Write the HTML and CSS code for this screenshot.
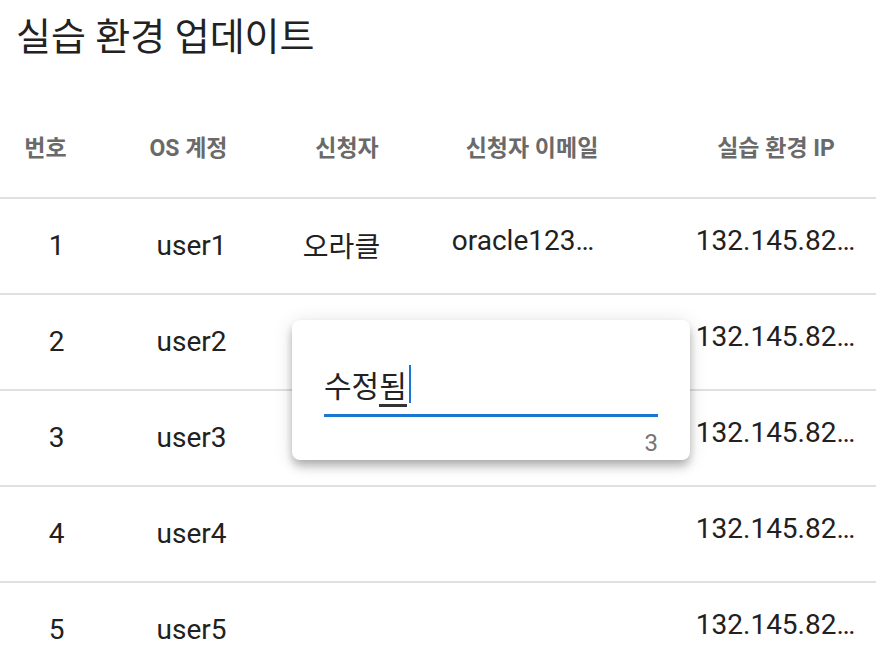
FILE: index.html
```html
<!DOCTYPE html>
<html lang="ko">
<head>
<meta charset="utf-8">
<title>실습 환경 업데이트</title>
<link rel="stylesheet" href="styles.css">
</head>
<body>
<div class="page">
  <h1 class="title">실습 환경 업데이트</h1>
  <div class="table-wrap">
    <div class="table">
      <div class="row head">
        <div class="cell th c1">번호</div>
        <div class="cell th c2">OS 계정</div>
        <div class="cell th c3">신청자</div>
        <div class="cell th c4">신청자 이메일</div>
        <div class="cell th c5">실습 환경 IP</div>
      </div>
      <div class="row">
        <div class="cell">1</div>
        <div class="cell">user1</div>
        <div class="cell">오라클</div>
        <div class="cell raised"><span class="ellip">oracle123…</span></div>
        <div class="cell raised"><span class="ellip">132.145.82…</span></div>
      </div>
      <div class="row">
        <div class="cell">2</div>
        <div class="cell">user2</div>
        <div class="cell"></div>
        <div class="cell raised"></div>
        <div class="cell raised"><span class="ellip">132.145.82…</span></div>
      </div>
      <div class="row">
        <div class="cell">3</div>
        <div class="cell">user3</div>
        <div class="cell"></div>
        <div class="cell raised"></div>
        <div class="cell raised"><span class="ellip">132.145.82…</span></div>
      </div>
      <div class="row">
        <div class="cell">4</div>
        <div class="cell">user4</div>
        <div class="cell"></div>
        <div class="cell raised"></div>
        <div class="cell raised"><span class="ellip">132.145.82…</span></div>
      </div>
      <div class="row">
        <div class="cell">5</div>
        <div class="cell">user5</div>
        <div class="cell"></div>
        <div class="cell raised"></div>
        <div class="cell raised"><span class="ellip">132.145.82…</span></div>
      </div>
    </div>
  </div>

  <div class="popup">
    <div class="field">
      <div class="control">
        <span class="value">수정<span class="composing">됨</span></span><span class="caret"></span>
      </div>
      <div class="underline"></div>
      <div class="counter">3</div>
    </div>
  </div>
</div>
</body>
</html>
```

FILE: styles.css
```css
* { box-sizing: border-box; }
html, body {
  margin: 0;
  padding: 0;
  background: #ffffff;
  overflow: hidden;
}
body {
  font-family: "Roboto", "Noto Sans CJK KR", sans-serif;
  color: #212121;
  width: 876px;
  height: 668px;
}
.page {
  position: relative;
  width: 876px;
  height: 668px;
  overflow: hidden;
}
.title {
  margin: 0;
  padding: 12px 0 0 16px;
  height: 100px;
  font-size: 38px;
  font-weight: 400;
  line-height: 50px;
  color: #222222;
}
.table-wrap {
  width: 876px;
  overflow: hidden;
}
.table {
  width: 918px;
}
.row {
  display: grid;
  grid-template-columns: 113px 157px 143px 220px 285px;
  height: 96px;
  border-bottom: 2px solid #e0e0e0;
}
.row.head {
  height: 99px;
}
.cell {
  display: flex;
  align-items: center;
  justify-content: center;
  font-size: 28px;
  white-space: nowrap;
  padding-bottom: 2px;
}
.cell.raised {
  padding-bottom: 12px;
}
.th {
  font-size: 23px;
  font-weight: 700;
  color: #6a6a6a;
  padding-bottom: 5px;
}
.th.c1 { padding-right: 22px; }
.th.c2 { padding-right: 6px; }
.th.c3 { padding-left: 11px; }
.th.c4 { padding-left: 18px; }
.th.c5 { padding-left: 1px; }

.popup {
  position: absolute;
  left: 292px;
  top: 320px;
  width: 398px;
  height: 140px;
  background: #ffffff;
  border-radius: 8px;
  box-shadow: 0 4px 8px -2px rgba(0,0,0,0.2), 0 8px 10px rgba(0,0,0,0.14), 0 2px 20px rgba(0,0,0,0.12);
  padding: 42px 32px 0 32px;
}
.field {
  display: flex;
  flex-direction: column;
}
.control {
  display: flex;
  align-items: center;
  height: 52px;
  padding-bottom: 8px;
  font-size: 30px;
  color: #222222;
}
.composing {
  border-bottom: 3px solid #333333;
}
.caret {
  display: inline-block;
  width: 2px;
  height: 38px;
  background: #1976d2;
  margin-left: 2px;
}
.underline {
  height: 3px;
  background: #1976d2;
}
.counter {
  align-self: flex-end;
  font-size: 24px;
  color: #757575;
  margin-top: 12px;
  line-height: 28px;
}
```
